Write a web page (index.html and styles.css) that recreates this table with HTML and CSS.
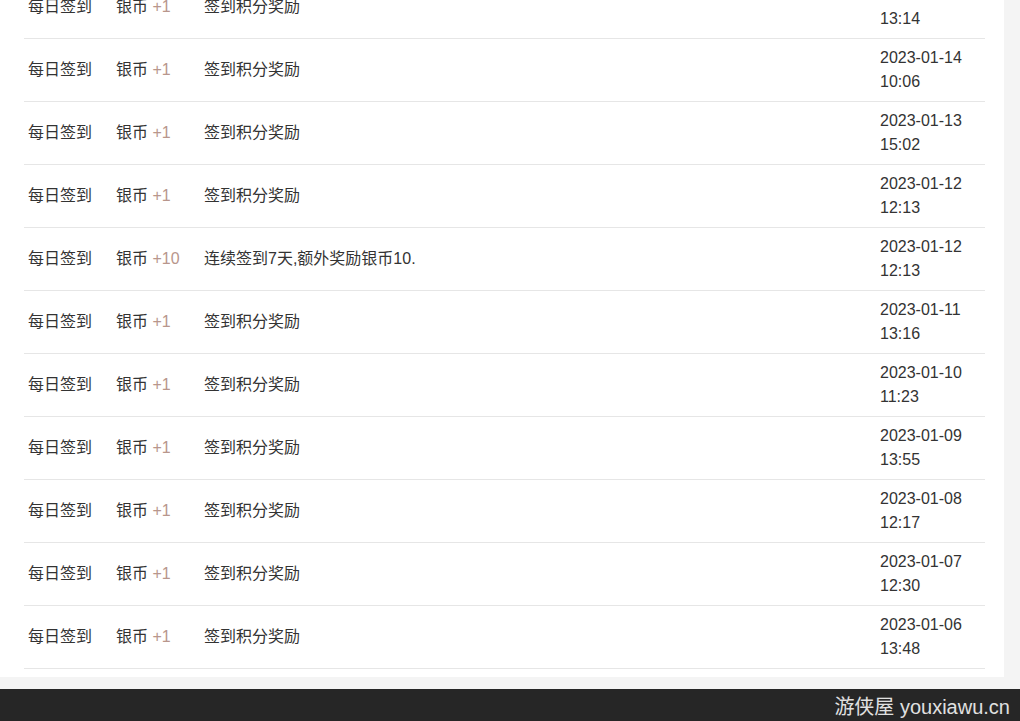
FILE: index.html
```html
<!DOCTYPE html>
<html lang="zh-CN">
<head>
    <meta charset="UTF-8">
    <meta name="viewport" content="width=device-width, initial-scale=1.0">
    <title>积分记录</title>
    <link rel="stylesheet" href="styles.css">
</head>
<body>

    <div class="panel">
        <table class="log-table">
            <colgroup>
                <col class="col-type">
                <col class="col-amount">
                <col class="col-desc">
                <col class="col-time">
            </colgroup>
            <tbody>
                <tr>
                    <td>每日签到</td>
                    <td>银币 <span class="plus">+1</span></td>
                    <td>签到积分奖励</td>
                    <td>2023-01-15<br>13:14</td>
                </tr>
                <tr>
                    <td>每日签到</td>
                    <td>银币 <span class="plus">+1</span></td>
                    <td>签到积分奖励</td>
                    <td>2023-01-14<br>10:06</td>
                </tr>
                <tr>
                    <td>每日签到</td>
                    <td>银币 <span class="plus">+1</span></td>
                    <td>签到积分奖励</td>
                    <td>2023-01-13<br>15:02</td>
                </tr>
                <tr>
                    <td>每日签到</td>
                    <td>银币 <span class="plus">+1</span></td>
                    <td>签到积分奖励</td>
                    <td>2023-01-12<br>12:13</td>
                </tr>
                <tr>
                    <td>每日签到</td>
                    <td>银币 <span class="plus">+10</span></td>
                    <td>连续签到7天,额外奖励银币10.</td>
                    <td>2023-01-12<br>12:13</td>
                </tr>
                <tr>
                    <td>每日签到</td>
                    <td>银币 <span class="plus">+1</span></td>
                    <td>签到积分奖励</td>
                    <td>2023-01-11<br>13:16</td>
                </tr>
                <tr>
                    <td>每日签到</td>
                    <td>银币 <span class="plus">+1</span></td>
                    <td>签到积分奖励</td>
                    <td>2023-01-10<br>11:23</td>
                </tr>
                <tr>
                    <td>每日签到</td>
                    <td>银币 <span class="plus">+1</span></td>
                    <td>签到积分奖励</td>
                    <td>2023-01-09<br>13:55</td>
                </tr>
                <tr>
                    <td>每日签到</td>
                    <td>银币 <span class="plus">+1</span></td>
                    <td>签到积分奖励</td>
                    <td>2023-01-08<br>12:17</td>
                </tr>
                <tr>
                    <td>每日签到</td>
                    <td>银币 <span class="plus">+1</span></td>
                    <td>签到积分奖励</td>
                    <td>2023-01-07<br>12:30</td>
                </tr>
                <tr>
                    <td>每日签到</td>
                    <td>银币 <span class="plus">+1</span></td>
                    <td>签到积分奖励</td>
                    <td>2023-01-06<br>13:48</td>
                </tr>
            </tbody>
        </table>
    </div>

    <div class="footer-bar">
        <span class="watermark">游侠屋 youxiawu.cn</span>
    </div>

</body>
</html>
```

FILE: styles.css
```css
body {
    font-family: 'Liberation Sans', 'Noto Sans CJK SC', sans-serif;
    background-color: #f4f4f4;
    color: #333;
    margin: 0;
    padding: 0;
    overflow: hidden;
}
.panel {
    background-color: #fff;
    width: 1004px;
    margin-top: -24px;
    padding: 0 19px 8px 24px;
    box-sizing: border-box;
}
.log-table {
    width: 961px;
    border-collapse: collapse;
    table-layout: fixed;
    font-size: 16px;
}
.col-type {
    width: 88px;
}
.col-amount {
    width: 88px;
}
.col-desc {
    width: 676px;
}
.col-time {
    width: 109px;
}
.log-table td {
    padding: 7px 0 7px 4px;
    line-height: 24px;
    height: 48px;
    border-bottom: 1px solid #e6e6e6;
    vertical-align: middle;
    white-space: nowrap;
}
.plus {
    color: #b8968c;
}
.footer-bar {
    margin-top: 12px;
    height: 32px;
    background-color: #262626;
    display: flex;
    justify-content: flex-end;
    align-items: center;
    padding-right: 10px;
}
.watermark {
    color: #e0e0e0;
    font-size: 20px;
}
```
